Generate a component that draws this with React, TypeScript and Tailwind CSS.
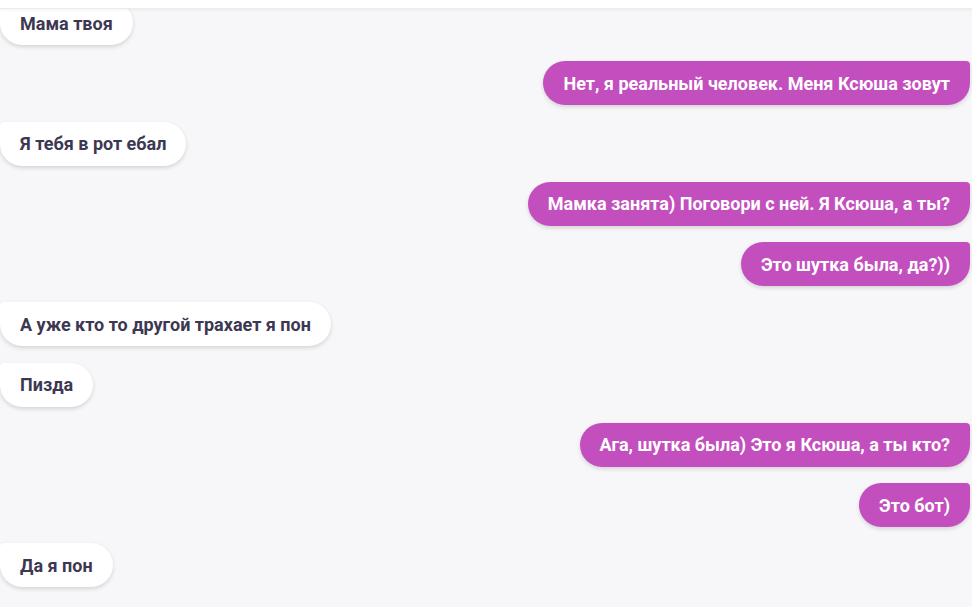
import React from "react";

type Msg = { text: string; mine: boolean };

const messages: Msg[] = [
  { text: "Мама твоя", mine: false },
  { text: "Нет, я реальный человек. Меня Ксюша зовут", mine: true },
  { text: "Я тебя в рот ебал", mine: false },
  { text: "Мамка занята) Поговори с ней. Я Ксюша, а ты?", mine: true },
  { text: "Это шутка была, да?))", mine: true },
  { text: "А уже кто то другой трахает я пон", mine: false },
  { text: "Пизда", mine: false },
  { text: "Ага, шутка была) Это я Ксюша, а ты кто?", mine: true },
  { text: "Это бот)", mine: true },
  { text: "Да я пон", mine: false },
];

function Bubble({ msg }: { msg: Msg }) {
  if (msg.mine) {
    return (
      <div className="flex justify-end">
        <div className="h-11 flex items-center px-5 rounded-[22px] rounded-tr-[4px] bg-[#c34fbe] text-white font-bold text-[18px] shadow-[0_2px_4px_rgba(0,0,0,0.14)] whitespace-nowrap">
          {msg.text}
        </div>
      </div>
    );
  }
  return (
    <div className="flex justify-start">
      <div className="h-11 flex items-center px-5 rounded-[22px] rounded-tl-[4px] bg-white text-[#3d3852] font-bold text-[18px] shadow-[0_2px_4px_rgba(0,0,0,0.14)] whitespace-nowrap">
        {msg.text}
      </div>
    </div>
  );
}

export default function App() {
  return (
    <div
      className="relative w-[972px] h-[607px] overflow-hidden bg-[#f7f7f9]"
      style={{ fontFamily: "Roboto, 'Liberation Sans', sans-serif" }}
    >
      {/* top bar */}
      <div className="absolute top-0 left-0 right-0 h-[9px] bg-white border-b border-[#ebebf0] shadow-[0_1px_3px_rgba(0,0,0,0.06)] z-10" />

      {/* message list */}
      <div className="flex flex-col gap-[16.25px] pt-[1px] pl-0 pr-[2px]">
        {messages.map((m, i) => (
          <Bubble key={i} msg={m} />
        ))}
      </div>
    </div>
  );
}
